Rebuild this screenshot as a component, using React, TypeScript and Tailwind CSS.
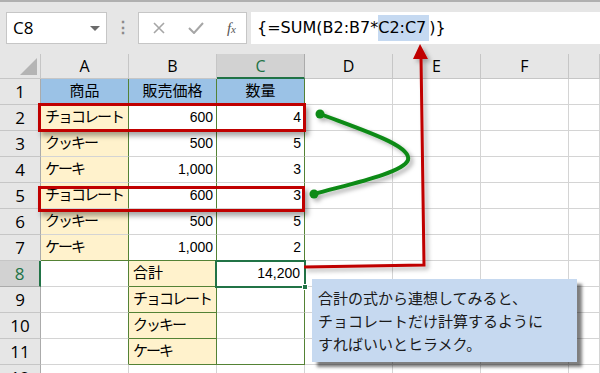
import { ReactNode } from "react";
import { twMerge } from "tailwind-merge";

const FONT = "font-['Liberation_Sans','Noto_Sans_CJK_JP',sans-serif]";

type CellProps = { children?: ReactNode; className?: string };

function Cell({ children, className = "" }: CellProps) {
  return (
    <div
      className={twMerge(
        "flex items-center overflow-hidden whitespace-nowrap border-r border-b border-[#d4d4d4] bg-white text-[15px] text-black",
        className
      )}
    >
      {children}
    </div>
  );
}

function ColHeader({ label, active }: { label: string; active?: boolean }) {
  return (
    <div
      className={`flex items-center justify-center border-r border-b font-['Open_Sans',sans-serif] text-[16px] ${
        active
          ? "bg-[#d2d2d2] text-[#217346] border-r-[#ababab] border-b-2 border-b-[#217346]"
          : "bg-[#e6e6e6] text-black border-[#c6c6c6]"
      }`}
    >
      {label}
    </div>
  );
}

function RowHeader({ n, active }: { n: number; active?: boolean }) {
  return (
    <div
      className={`flex items-center justify-center border-b font-['Open_Sans',sans-serif] text-[17px] ${
        active
          ? "bg-[#d2d2d2] text-[#217346] border-b-[#ababab] border-r-2 border-r-[#217346]"
          : "bg-[#e6e6e6] text-black border-b-[#c6c6c6] border-r border-r-[#ababab]"
      }`}
    >
      {n}
    </div>
  );
}

const items = [
  ["チョコレート", "600", "4"],
  ["クッキー", "500", "5"],
  ["ケーキ", "1,000", "3"],
  ["チョコレート", "600", "3"],
  ["クッキー", "500", "5"],
  ["ケーキ", "1,000", "2"],
];

const totals = ["チョコレート", "クッキー", "ケーキ"];

export default function App() {
  return (
    <div className={`relative h-[373px] w-[600px] overflow-hidden bg-white ${FONT}`}>
      {/* Formula bar */}
      <div className="flex h-[54px] items-start border-t-2 border-t-[#b0b0b0] bg-[#e6e6e6] pt-[10px]">
        <div className="ml-[6px] flex h-[32px] w-[101px] items-center justify-between border border-[#c6c6c6] bg-white pl-[6px] pr-[6px]">
          <span className="font-['Open_Sans',sans-serif] text-[17px] text-black">C8</span>
          <span className="h-0 w-0 border-x-[5px] border-t-[5px] border-x-transparent border-t-[#6b6b6b]" />
        </div>
        <div className="flex h-[32px] w-[31px] items-center justify-center text-[16px] font-bold text-[#8a8a8a]">
          ⋮
        </div>
        <div className="flex h-[32px] w-[109px] items-center justify-between border border-[#c6c6c6] bg-white pl-[14px] pr-[10px]">
          <svg width="12" height="12" viewBox="0 0 12 12">
            <path d="M1 1 L11 11 M11 1 L1 11" stroke="#a6a6a6" strokeWidth="1.6" />
          </svg>
          <svg width="16" height="12" viewBox="0 0 16 12">
            <path d="M1 6 L6 11 L15 1" stroke="#a6a6a6" strokeWidth="2" fill="none" />
          </svg>
          <span className="font-['Liberation_Serif',serif] text-[15px] italic text-[#555]">
            f<span className="text-[11px]">x</span>
          </span>
        </div>
        <div className="ml-[4px] flex h-[32px] flex-1 items-center bg-white pl-[6px] font-['DejaVu_Sans',sans-serif] text-[16px] text-black">
          {"{=SUM(B2:B7*"}
          <span className="flex h-[26px] items-center bg-[#c5d9f1] pr-[3px]">C2:C7</span>
          {")}"}
        </div>
      </div>

      {/* Sheet grid */}
      <div className="grid grid-cols-[41px_88px_88px_88px_88px_88px_88px_31px] grid-rows-[25px_repeat(12,26px)]">
        <div className="relative border-r border-b border-[#c6c6c6] bg-[#e6e6e6]">
          <span className="absolute bottom-[3px] right-[3px] h-0 w-0 border-b-[17px] border-l-[17px] border-b-[#b4b4b4] border-l-transparent" />
        </div>
        <ColHeader label="A" />
        <ColHeader label="B" />
        <ColHeader label="C" active />
        <ColHeader label="D" />
        <ColHeader label="E" />
        <ColHeader label="F" />
        <ColHeader label="" />

        {/* row 1 */}
        <RowHeader n={1} />
        <Cell className="justify-center bg-[#9bc2e6] border-r-[#548235]">商品</Cell>
        <Cell className="justify-center bg-[#9bc2e6] border-r-[#548235]">販売価格</Cell>
        <Cell className="justify-center bg-[#9bc2e6] border-r-[#548235]">数量</Cell>
        <Cell />
        <Cell />
        <Cell />
        <Cell />

        {/* rows 2-7 */}
        {items.map((r, i) => (
          <div key={i} className="contents">
            <RowHeader n={i + 2} />
            <Cell
              className={`bg-[#fff2cc] pl-[4px] tracking-[-2px] border-r-[#548235] ${i === 5 ? "border-b-[#548235]" : ""}`}
            >
              {r[0]}
            </Cell>
            <Cell
              className={`justify-end pr-[3px] text-[14px] border-r-[#548235] ${i === 5 ? "border-b-[#548235]" : ""}`}
            >
              {r[1]}
            </Cell>
            <Cell
              className={`justify-end pr-[3px] text-[14px] border-r-[#548235] ${i === 5 ? "border-b-[#548235]" : ""}`}
            >
              {r[2]}
            </Cell>
            <Cell />
            <Cell />
            <Cell />
            <Cell />
          </div>
        ))}

        {/* row 8 */}
        <RowHeader n={8} active />
        <Cell className="border-r-[#548235]" />
        <Cell className="bg-[#fff2cc] pl-[4px] border-r-[#548235] border-b-[#548235]">合計</Cell>
        <Cell className="justify-end pr-[4px] text-[14px] border-r-[#548235]">14,200</Cell>
        <Cell />
        <Cell />
        <Cell />
        <Cell />

        {/* rows 9-11 */}
        {totals.map((t, i) => (
          <div key={t} className="contents">
            <RowHeader n={i + 9} />
            <Cell className="border-r-[#548235]" />
            <Cell className="bg-[#fff2cc] pl-[4px] tracking-[-2px] border-r-[#548235] border-b-[#548235]">{t}</Cell>
            <Cell className={`border-r-[#548235] ${i === 2 ? "border-b-[#548235]" : ""}`} />
            <Cell />
            <Cell />
            <Cell />
            <Cell />
          </div>
        ))}

        {/* row 12 */}
        <RowHeader n={12} />
        <Cell />
        <Cell />
        <Cell />
        <Cell />
        <Cell />
        <Cell />
        <Cell />
      </div>

      {/* active cell C8 */}
      <div className="pointer-events-none absolute left-[215px] top-[260px] h-[28px] w-[91px] border-2 border-[#217346]">
        <span className="absolute -bottom-[4px] -right-[4px] h-[6px] w-[6px] border border-white bg-[#217346]" />
      </div>

      {/* red highlight boxes */}
      <div className="pointer-events-none absolute left-[38px] top-[103px] h-[29px] w-[268px] border-[3px] border-[#c00000] shadow-[3px_4px_5px_rgba(0,0,0,0.35)]" />
      <div className="pointer-events-none absolute left-[38px] top-[186px] h-[26px] w-[267px] border-[3px] border-[#c00000] shadow-[3px_4px_5px_rgba(0,0,0,0.35)]" />

      {/* annotations */}
      <svg className="pointer-events-none absolute left-0 top-0" width="600" height="373" viewBox="0 0 600 373">
        <defs>
          <filter id="sh" x="-20%" y="-20%" width="140%" height="140%">
            <feDropShadow dx="3" dy="3" stdDeviation="2" floodColor="#000" floodOpacity="0.3" />
          </filter>
        </defs>
        <g filter="url(#sh)">
          <path
            d="M320 114 C365 131 412 146 408 160 C403 173 350 184 314 194"
            stroke="#0b8a14"
            strokeWidth="4"
            fill="none"
            strokeLinecap="round"
          />
          <circle cx="320" cy="114" r="4.5" fill="#0b8a14" />
          <circle cx="314" cy="194" r="4.5" fill="#0b8a14" />
        </g>
        <g filter="url(#sh)">
          <path d="M304 267 L424 265 L421 56" stroke="#c00000" strokeWidth="3" fill="none" />
          <path d="M420 44 L428 59 L413 59 Z" fill="#c00000" />
        </g>
      </svg>

      {/* callout */}
      <div className="absolute left-[312px] top-[279px] flex h-[83px] w-[265px] flex-col justify-center bg-[#c6d9f0] pl-[6px] font-['Noto_Sans_CJK_JP',sans-serif] text-[15px] leading-[23px] text-[#1a1a1a] shadow-[5px_5px_3px_rgba(0,0,0,0.5)]">
        <span>合計の式から連想してみると、</span>
        <span>チョコレートだけ計算するように</span>
        <span>すればいいとヒラメク。</span>
      </div>
    </div>
  );
}
